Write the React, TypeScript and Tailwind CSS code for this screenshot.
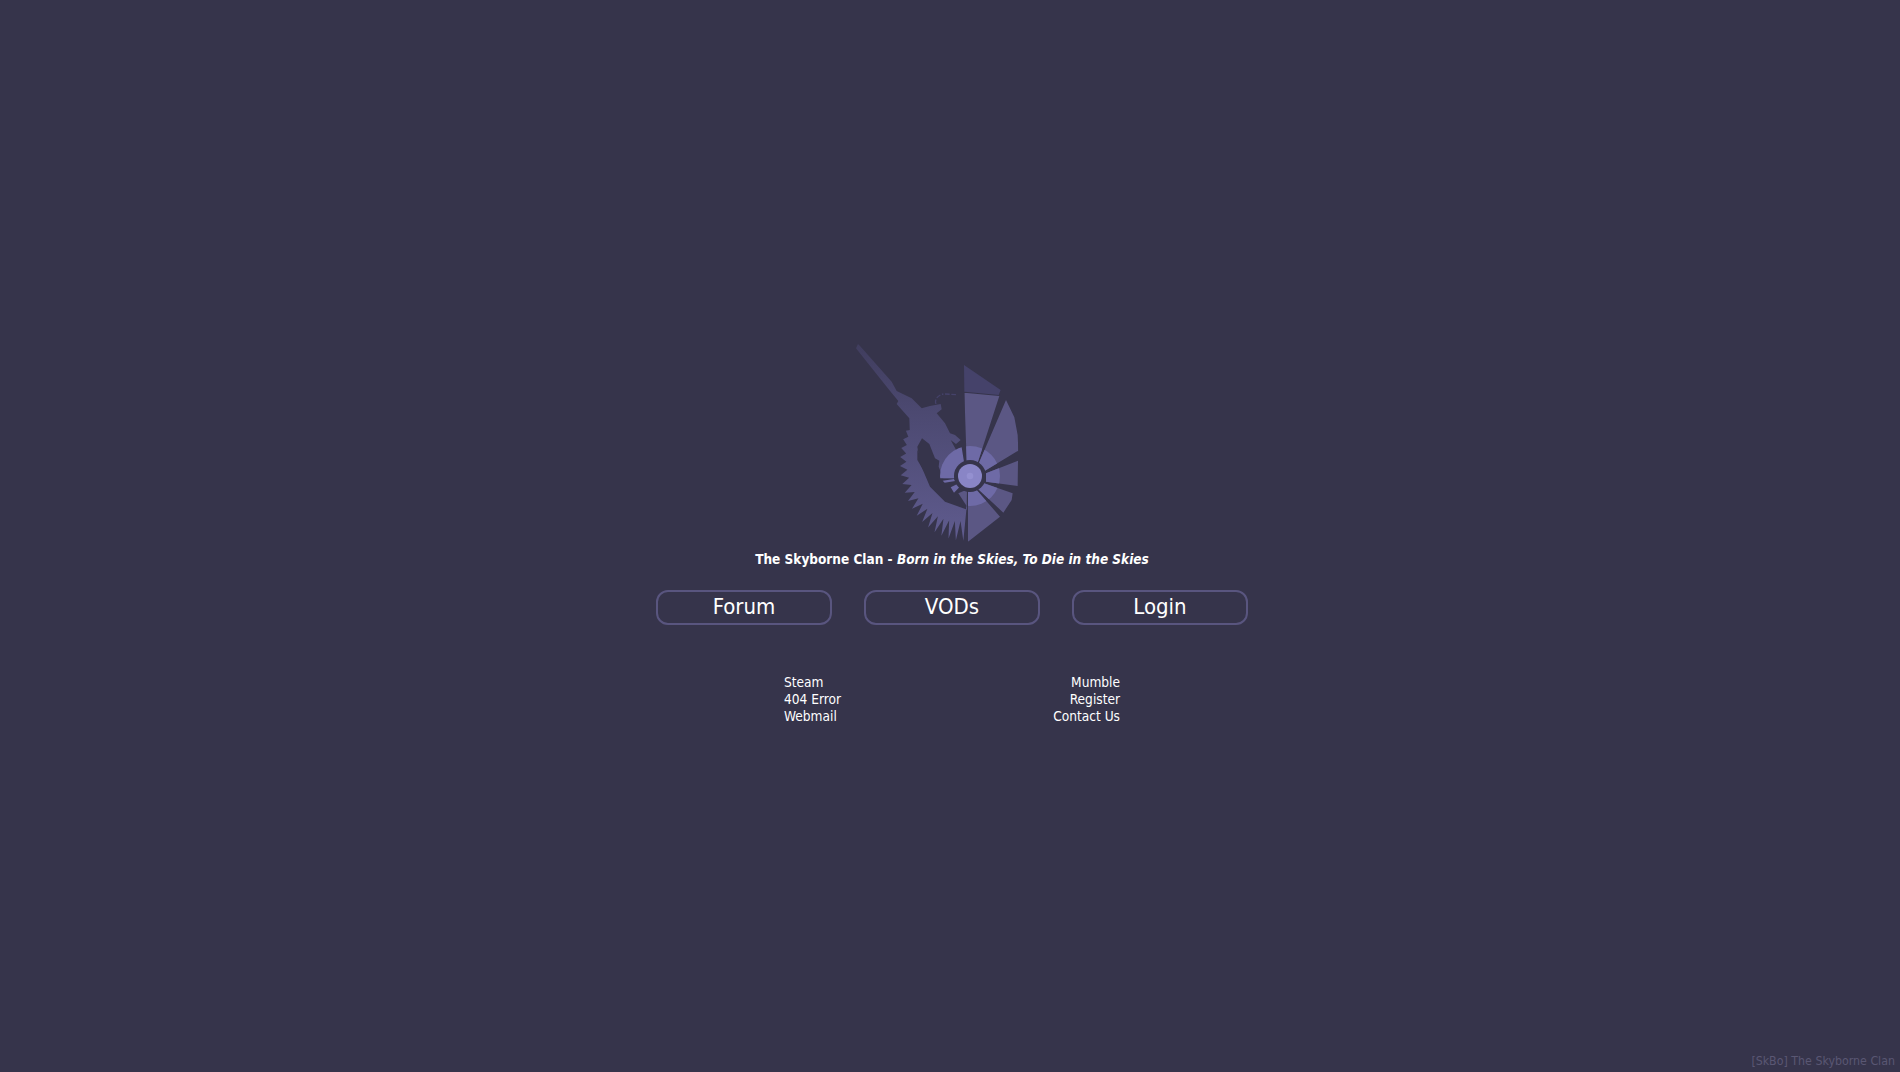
const belt = (() => {
  // serrated ammo belt: alternating tips and valleys round an ellipse
  const pts: string[] = [];
  const n = 34;
  for (let i = 0; i <= n; i++) {
    const a = ((205 - (i / n) * 115) * Math.PI) / 180;
    const tooth = 0.06 + 0.2 * (i / n);
    const r = i % 2 === 0 ? 1 : 1 - tooth;
    const x = 400 + 190 * r * Math.cos(a);
    const y = 400 + 232 * r * Math.sin(a);
    pts.push(`${x.toFixed(1)},${y.toFixed(1)}`);
  }
  return pts.join(' ');
})();

function Logo() {
  return (
    <svg width="244" height="220" viewBox="0 0 732 660" className="block">
      <defs>
        <linearGradient id="body" gradientUnits="userSpaceOnUse" x1="0" y1="40" x2="0" y2="630">
          <stop offset="0" stopColor="#403d5e" />
          <stop offset="0.35" stopColor="#4c4971" />
          <stop offset="1" stopColor="#5f5b8e" />
        </linearGradient>
        <clipPath id="wedges">
          <path d="M403,188 L508,198 L443,398 L410,395 Z M528,210 L553,262 L563,315 L565,362 L465,422 L447,398 Z M564,392 L563,468 L468,455 L468,430 Z M548,490 L545,510 L520,548 L445,478 L462,460 Z M510,560 L414,635 L414,485 L440,480 Z M393,340 L402,395 L375,420 L372,445 L330,445 L330,340 Z" />
        </clipPath>
      </defs>

      {/* rifle, arm and belt */}
      <path
        fill="url(#body)"
        d="M84,42 L90,48 L185,155 L200,183 L245,205 L275,235 L300,228 L332,222 L335,238 L320,250 L345,280 L360,310 L375,315 L392,330 L378,342 L362,330 L400,400 L410,540 L300,430 L240,320 L238,265 L200,222 L205,213 L176,178 L78,55 Z"
      />
      <polygon fill="url(#body)" points={`${belt} 410,530 340,500 300,455 262,390 262,330 240,300`} />
      <path fill="none" stroke="#45426a" strokeWidth="4" d="M318,222 C312,208 325,195 340,192 M345,192 L378,194" strokeDasharray="14 5" />

      {/* cut-out behind the belt */}
      <path
        fill="#36344b"
        d="M276,325 L298,342 L315,385 L328,392 L326,410 L340,445 L380,445 L408,485 L408,538 L345,515 L300,470 L270,400 L262,350 Z"
      />

      {/* shield wedges */}
      <path fill="#45426a" d="M402,105 L512,180 L506,195 L403,185 Z" />
      <g clipPath="url(#wedges)">
        <rect x="403" y="180" width="170" height="460" fill="#5b5784" />
        <circle cx="420" cy="438" r="90" fill="#6e6aa6" />
      </g>
      <path fill="#5b5784" d="M408,480 L411,480 L410,528 L385,490 Z" />
      <path fill="#6e6aa6" d="M338,452 L372,447 L376,453 L344,458 Z M362,472 L382,462 L388,472 L372,488 Z" />
      <circle cx="420" cy="438" r="48" fill="#36344b" />
      <circle cx="420" cy="438" r="36" fill="#8985c6" />
      <circle cx="420" cy="438" r="10" fill="#9490d0" />
    </svg>
  );
}

function NavButton({ label }: { label: string }) {
  return (
    <a className="flex h-[35px] w-[176px] items-center justify-center rounded-[12px] border-2 border-[#59557f] pb-[2px] text-[22px] text-white">
      {label}
    </a>
  );
}

export default function App() {
  return (
    <div className="relative flex h-screen w-full flex-col items-center overflow-hidden bg-[#36344b] pl-[4px] pt-[330px] font-['DejaVu_Sans_Condensed','DejaVu_Sans',sans-serif] text-white">
      <Logo />
      <p className="mt-[-1px] text-[13.5px] leading-[20px] font-bold">
        The Skyborne Clan - <em>Born in the Skies, To Die in the Skies</em>
      </p>
      <div className="mt-[21px] flex w-[592px] gap-[32px]">
        <NavButton label="Forum" />
        <NavButton label="VODs" />
        <NavButton label="Login" />
      </div>
      <div className="mt-[49px] flex w-[336px] justify-between text-[13.6px] leading-[17px]">
        <ul>
          <li>Steam</li>
          <li>404 Error</li>
          <li>Webmail</li>
        </ul>
        <ul className="text-right">
          <li>Mumble</li>
          <li>Register</li>
          <li>Contact Us</li>
        </ul>
      </div>
      <span className="absolute right-[5px] bottom-[3px] text-[12.3px] leading-[16px] text-[#5a5773]">
        [SkBo] The Skyborne Clan
      </span>
    </div>
  );
}
